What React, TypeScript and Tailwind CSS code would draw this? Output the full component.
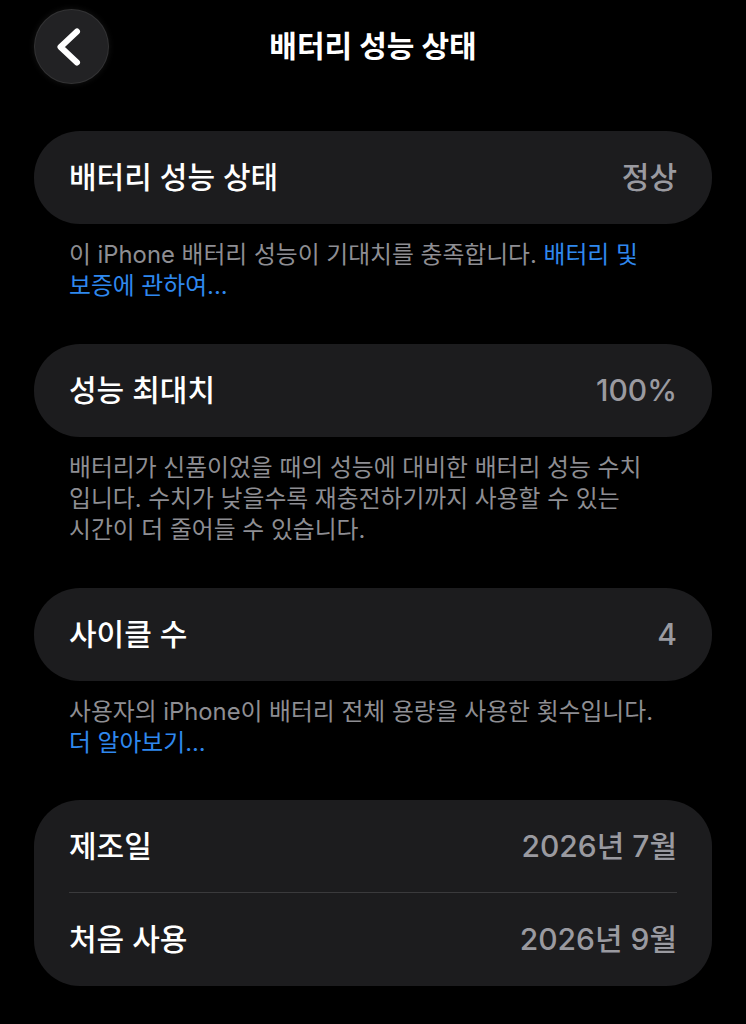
import React from "react";

const FONT = { fontFamily: '"Inter", "Noto Sans CJK KR", sans-serif' };

function Card({ label, value }: { label: string; value: string }) {
  return (
    <div className="mx-[34px] h-[93px] rounded-[46px] bg-[#1c1c1e] px-[35px] flex items-center justify-between">
      <span className="text-[30px] font-medium text-white whitespace-nowrap">{label}</span>
      <span className="text-[30px] font-medium text-[#9a9aa0] whitespace-nowrap">{value}</span>
    </div>
  );
}

function Note({ children }: { children: React.ReactNode }) {
  return (
    <div className="mx-[34px] px-[35px] mt-[15px] text-[23.8px] leading-[31px] text-[#8e8e93]">
      {children}
    </div>
  );
}

export default function App() {
  return (
    <div className="w-full h-[1024px] overflow-hidden bg-black" style={FONT}>
      <div className="grid grid-cols-[1fr_auto_1fr] items-center pt-[9px]">
        <div className="pl-[34px]">
          <div className="w-[75px] h-[75px] rounded-full bg-[#222224] border border-[#3a3a3c]/70 shadow-[0_0_6px_rgba(255,255,255,0.08)] flex items-center justify-center">
            <svg width="30" height="44" viewBox="0 0 30 44" className="-ml-[5px]">
              <polyline
                points="23,6.5 6.5,22 23,37.5"
                fill="none"
                stroke="white"
                strokeWidth="6"
                strokeLinecap="round"
                strokeLinejoin="round"
              />
            </svg>
          </div>
        </div>
        <h1 className="text-[30px] font-bold text-white whitespace-nowrap">배터리 성능 상태</h1>
        <div />
      </div>

      <div className="mt-[47px]">
        <Card label="배터리 성능 상태" value="정상" />
        <Note>
          <div className="whitespace-nowrap">
            이 iPhone 배터리 성능이 기대치를 충족합니다. <span className="text-[#2f88ee]">배터리 및</span>
          </div>
          <div className="whitespace-nowrap text-[#2f88ee]">보증에 관하여...</div>
        </Note>
      </div>

      <div className="mt-[43px]">
        <Card label="성능 최대치" value="100%" />
        <Note>
          <div className="whitespace-nowrap">배터리가 신품이었을 때의 성능에 대비한 배터리 성능 수치</div>
          <div className="whitespace-nowrap">입니다. 수치가 낮을수록 재충전하기까지 사용할 수 있는</div>
          <div className="whitespace-nowrap">시간이 더 줄어들 수 있습니다.</div>
        </Note>
      </div>

      <div className="mt-[43px]">
        <Card label="사이클 수" value="4" />
        <Note>
          <div className="whitespace-nowrap">사용자의 iPhone이 배터리 전체 용량을 사용한 횟수입니다.</div>
          <div className="whitespace-nowrap text-[#2f88ee]">더 알아보기...</div>
        </Note>
      </div>

      <div className="mt-[42px] mx-[34px] rounded-[46px] bg-[#1c1c1e] px-[35px]">
        <div className="h-[92px] flex items-center justify-between">
          <span className="text-[30px] font-medium text-white whitespace-nowrap">제조일</span>
          <span className="text-[30px] font-medium text-[#9a9aa0] whitespace-nowrap">2026년 7월</span>
        </div>
        <div className="h-px bg-[#3a3a3c]" />
        <div className="h-[93px] flex items-center justify-between">
          <span className="text-[30px] font-medium text-white whitespace-nowrap">처음 사용</span>
          <span className="text-[30px] font-medium text-[#9a9aa0] whitespace-nowrap">2026년 9월</span>
        </div>
      </div>
    </div>
  );
}
